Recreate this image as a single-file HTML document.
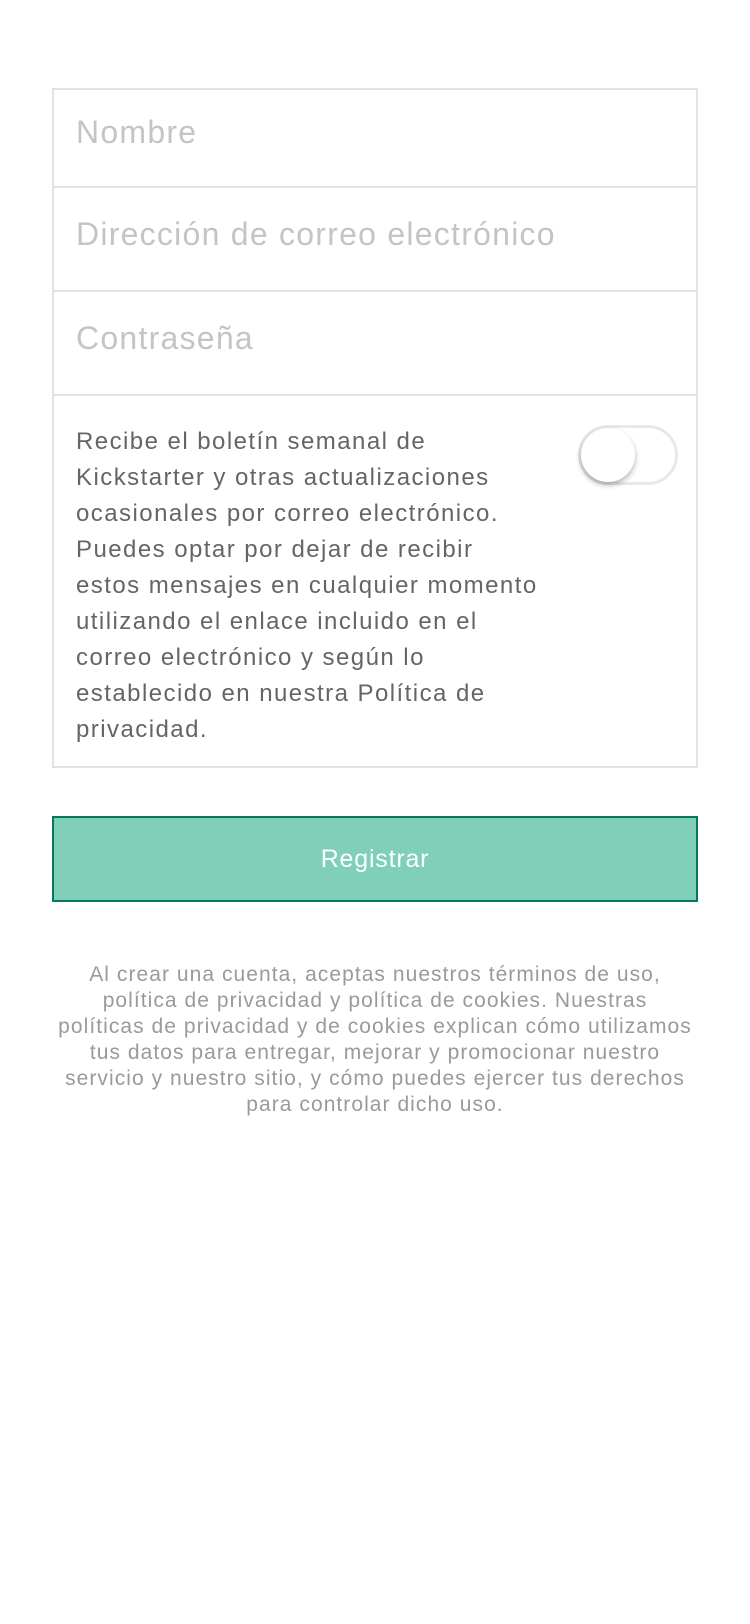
<!DOCTYPE html>
<html><head><meta charset="utf-8"><style>
body{margin:0;width:750px;height:1624px;background:#fff;font-family:"Liberation Sans",sans-serif;position:relative;overflow:hidden}
.box{position:absolute;left:52px;top:88px;width:646px;height:680px;border:2px solid #e2e2e2;box-sizing:border-box}
.row{position:absolute;left:0;right:0;border-bottom:2px solid #e2e2e2}
.ph{position:absolute;left:22px;font-size:32px;letter-spacing:1.25px;color:#c4c4c8;white-space:nowrap}
.para{position:absolute;left:22px;top:32px;font-size:24px;line-height:36px;letter-spacing:1.45px;color:#656565;white-space:nowrap}
.tog{position:absolute;left:524px;top:335px;width:100px;height:60px;border-radius:30px;border:3px solid #e8e8e8;box-sizing:border-box;background:#fff}
.knob{position:absolute;left:0;top:0;width:54px;height:54px;border-radius:50%;background:#fff;box-shadow:0 3px 6px rgba(0,0,0,.3)}
.btn{position:absolute;left:52px;top:816px;width:646px;height:86px;background:#80cfb8;border:2px solid #05775f;box-sizing:border-box;color:#fff;font-size:25px;letter-spacing:0.8px;text-align:center;line-height:82px}
.foot{position:absolute;left:0;width:750px;top:962px;text-align:center;font-size:21px;line-height:26px;letter-spacing:1.05px;color:#9a9a9a;white-space:nowrap}
</style></head><body>
<div class="box">
<div class="row" style="top:0;height:96px"><div class="ph" style="top:24px">Nombre</div></div>
<div class="row" style="top:96px;height:104px"><div class="ph" style="top:30px">Dirección de correo electrónico</div></div>
<div class="row" style="top:200px;height:104px"><div class="ph" style="top:30px">Contraseña</div></div>
<div style="position:absolute;top:302px;left:0;right:0">
<div class="para">Recibe el boletín semanal de<br>Kickstarter y otras actualizaciones<br>ocasionales por correo electrónico.<br>Puedes optar por dejar de recibir<br>estos mensajes en cualquier momento<br>utilizando el enlace incluido en el<br>correo electrónico y según lo<br>establecido en nuestra Política de<br>privacidad.</div>
</div>
<div class="tog" style="top:335px"><div class="knob"></div></div>
</div>
<div class="btn">Registrar</div>
<div class="foot">Al crear una cuenta, aceptas nuestros términos de uso,<br>política de privacidad y política de cookies. Nuestras<br>políticas de privacidad y de cookies explican cómo utilizamos<br>tus datos para entregar, mejorar y promocionar nuestro<br>servicio y nuestro sitio, y cómo puedes ejercer tus derechos<br>para controlar dicho uso.</div>
</body></html>
